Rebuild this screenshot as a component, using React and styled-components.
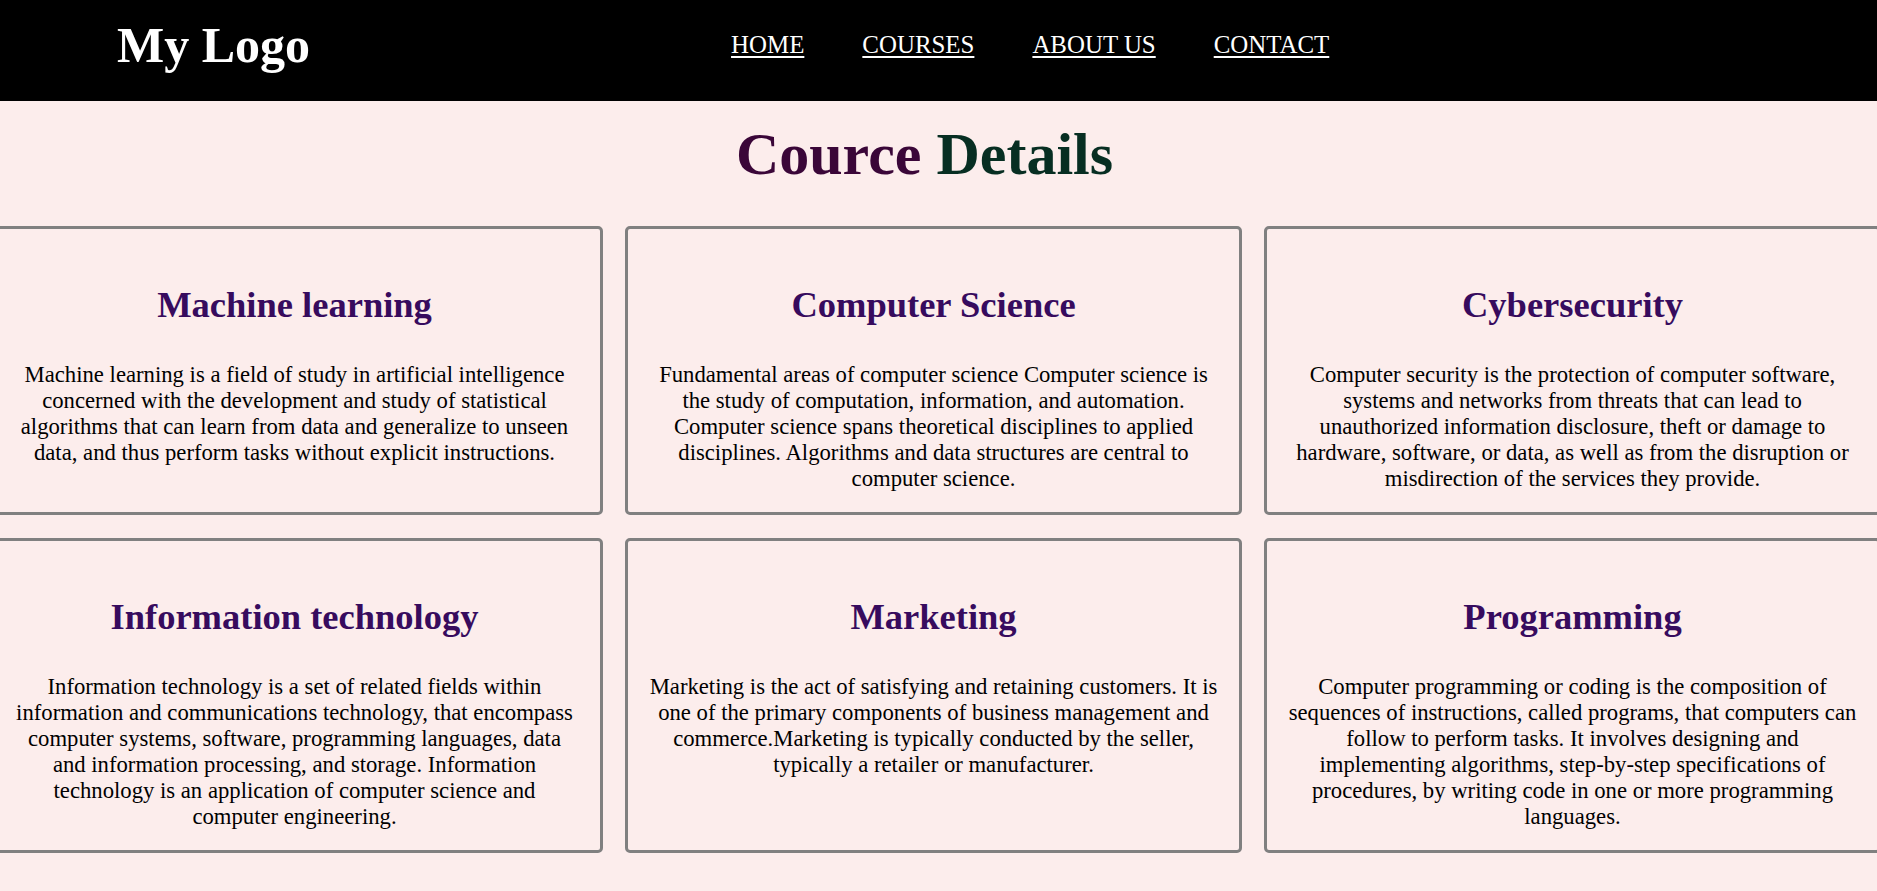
import React from "react";
import styled, { createGlobalStyle } from "styled-components";

const Global = createGlobalStyle`
  html, body {
    margin: 0;
    padding: 0;
    overflow: hidden;
  }
  body {
    background: #fcedec;
    font-family: "Liberation Serif", "Times New Roman", serif;
    color: #000;
  }
`;

const Header = styled.header`
  height: 101px;
  box-sizing: border-box;
  background: #000;
  display: flex;
  align-items: center;
  padding: 0 0 11px 117px;
`;

const Logo = styled.h1`
  margin: 0;
  font-size: 50px;
  font-weight: bold;
  color: #fff;
  line-height: normal;
`;

const Nav = styled.nav`
  display: flex;
  gap: 58px;
  margin-left: 421px;
`;

const NavLink = styled.a`
  color: #fff;
  font-size: 24.9px;
  text-decoration: underline;
  text-underline-offset: 3px;
  cursor: pointer;
`;

const Main = styled.main`
  display: flex;
  flex-direction: column;
`;

const Title = styled.h2`
  margin: 19px 0 37px;
  padding-right: 28px;
  text-align: center;
  font-size: 60px;
  font-weight: bold;
  line-height: normal;
`;

const TitleWord = styled.span`
  color: ${(p) => p.$color};
`;

const Grid = styled.div`
  display: grid;
  grid-template-columns: repeat(3, 617px);
  column-gap: 22px;
  row-gap: 23px;
  margin-left: -14px;
`;

const Card = styled.section`
  box-sizing: border-box;
  border: 3px solid #808080;
  border-radius: 5px;
  padding: 0 20.5px 20px;
  text-align: center;
`;

const CardTitle = styled.h3`
  margin: 54px 0 36px;
  font-size: 36.5px;
  font-weight: bold;
  color: #370b5e;
  line-height: normal;
`;

const CardText = styled.p`
  margin: 0;
  font-size: 22.7px;
  line-height: 26px;
`;

const courses = [
  {
    title: "Machine learning",
    text: "Machine learning is a field of study in artificial intelligence concerned with the development and study of statistical algorithms that can learn from data and generalize to unseen data, and thus perform tasks without explicit instructions.",
  },
  {
    title: "Computer Science",
    text: "Fundamental areas of computer science Computer science is the study of computation, information, and automation. Computer science spans theoretical disciplines to applied disciplines. Algorithms and data structures are central to computer science.",
  },
  {
    title: "Cybersecurity",
    text: "Computer security is the protection of computer software, systems and networks from threats that can lead to unauthorized information disclosure, theft or damage to hardware, software, or data, as well as from the disruption or misdirection of the services they provide.",
  },
  {
    title: "Information technology",
    text: "Information technology is a set of related fields within information and communications technology, that encompass computer systems, software, programming languages, data and information processing, and storage. Information technology is an application of computer science and computer engineering.",
  },
  {
    title: "Marketing",
    text: "Marketing is the act of satisfying and retaining customers. It is one of the primary components of business management and commerce.Marketing is typically conducted by the seller, typically a retailer or manufacturer.",
  },
  {
    title: "Programming",
    text: "Computer programming or coding is the composition of sequences of instructions, called programs, that computers can follow to perform tasks. It involves designing and implementing algorithms, step-by-step specifications of procedures, by writing code in one or more programming languages.",
  },
];

export default function App() {
  return (
    <>
      <Global />
      <Header>
        <Logo>My Logo</Logo>
        <Nav>
          <NavLink>HOME</NavLink>
          <NavLink>COURSES</NavLink>
          <NavLink>ABOUT US</NavLink>
          <NavLink>CONTACT</NavLink>
        </Nav>
      </Header>
      <Main>
        <Title>
          <TitleWord $color="#3a0638">Cource</TitleWord>{" "}
          <TitleWord $color="#072e22">Details</TitleWord>
        </Title>
        <Grid>
          {courses.map((c) => (
            <Card key={c.title}>
              <CardTitle>{c.title}</CardTitle>
              <CardText>{c.text}</CardText>
            </Card>
          ))}
        </Grid>
      </Main>
    </>
  );
}
